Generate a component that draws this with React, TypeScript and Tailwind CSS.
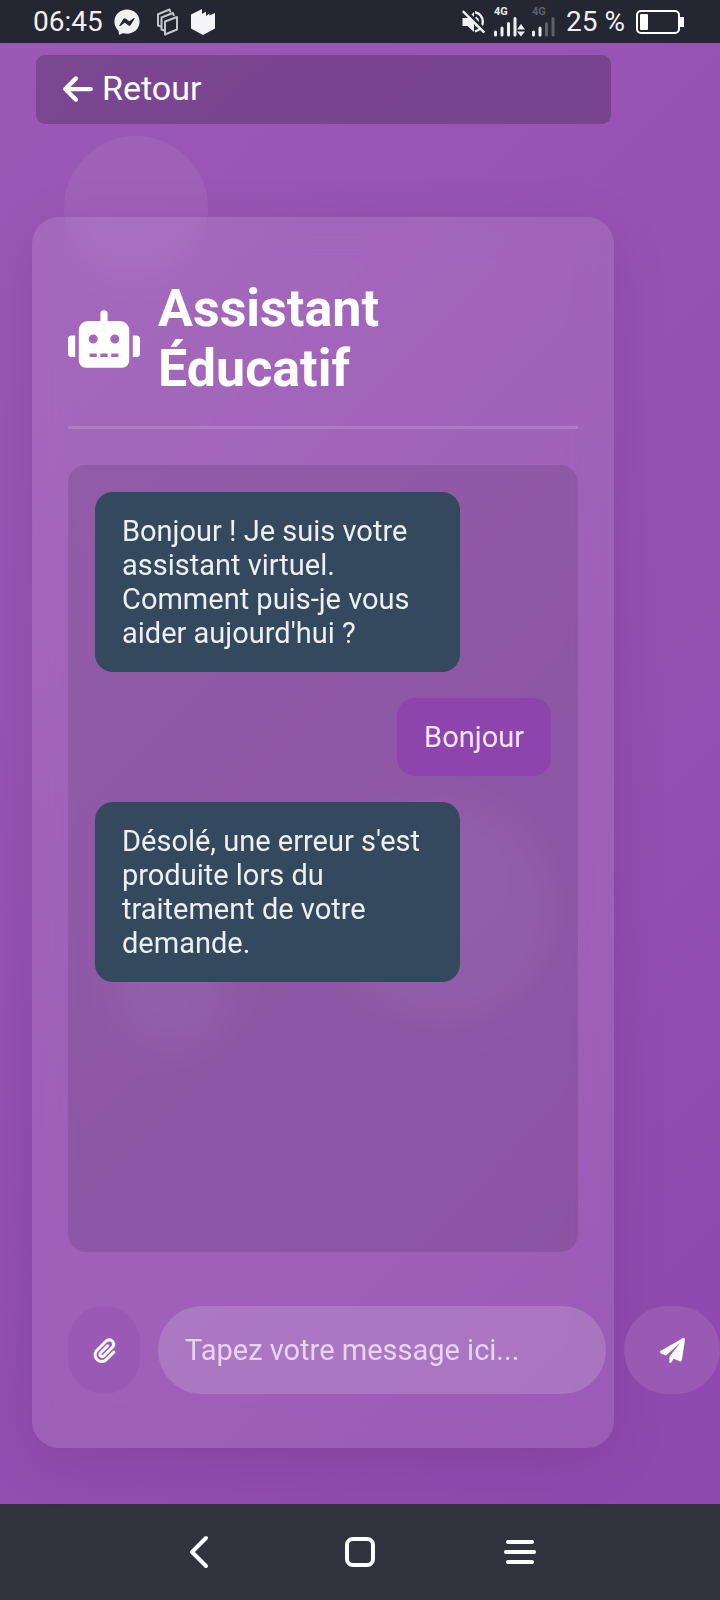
import React from "react";
import { FaRobot } from "react-icons/fa";
import { FaArrowLeft, FaPaperclip, FaFacebookMessenger } from "react-icons/fa6";

type Message = { from: "bot" | "user"; text: string };

const messages: Message[] = [
  { from: "bot", text: "Bonjour ! Je suis votre assistant virtuel. Comment puis-je vous aider aujourd'hui ?" },
  { from: "user", text: "Bonjour" },
  { from: "bot", text: "Désolé, une erreur s'est produite lors du traitement de votre demande." },
];

function StackIcon() {
  return (
    <svg className="h-7 w-6" viewBox="0 0 24 28" fill="none" stroke="#c4c5cb" strokeWidth="2" strokeLinejoin="round">
      <path d="M5 18.500 2 17.500V6.200L13.500 1.500l1 3" />
      <path d="M8.500 22.500 5.500 21.500V9.500L17 5l1 3" />
      <path d="M9 13.500 21 9v12.500L9 26.500z" />
    </svg>
  );
}

function BlockIcon() {
  return (
    <svg className="h-7 w-6" viewBox="0 0 24 28" fill="#f5f5f7">
      <path d="M0 6.500 11 1v5l4-2.500v4.500l3.500-2.500v2L24 5v15.500L12 27 0 20.500z" />
    </svg>
  );
}

function PlaneIcon() {
  return (
    <svg className="h-[25px] w-[25px]" viewBox="0 0 512 512" fill="currentColor">
      <path d="M511.6 36.86l-64 415.1c-1.500 9.734-7.375 18.220-15.970 23.050c-4.844 2.719-10.270 4.097-15.680 4.097c-4.188 0-8.319-.8154-12.290-2.472l-122.600-51.100l-50.860 76.290C226.300 508.500 219.800 512 212.800 512C201.300 512 192 502.700 192 491.200v-96.180c0-7.115 2.372-14.030 6.742-19.640L416 96l-293.700 264.300L19.690 317.500C8.438 312.800 .8125 302.200 .0625 289.100s5.469-23.720 16.060-29.990l448-255.100c10.690-6.109 23.880-5.547 34 1.406S513.500 24.720 511.600 36.860z" />
    </svg>
  );
}

function MutedIcon() {
  return (
    <svg className="h-6 w-6" viewBox="0 0 24 24" fill="none" stroke="#f0f0f2" strokeWidth="2.400">
      <path d="M0.500 8v8h5l6.500 6V2L5.500 8z" fill="#f0f0f2" stroke="none" />
      <path d="M13.500 7.500a5 5 0 0 1 0 8.500M13 2.200a9.800 9.800 0 0 1 0 19.200" />
      <path d="M2-1l23 23" stroke="#242632" strokeWidth="3" />
      <path d="M.8 1.200l21.500 21.500" />
    </svg>
  );
}

function Signal({ weak = false }: { weak?: boolean }) {
  return (
    <svg className={weak ? "h-9 w-6" : "h-9 w-8"} viewBox={weak ? "0 0 24 36" : "0 0 32 36"} strokeWidth="3" strokeLinecap="round" stroke="#f0f0f2">
      <text x="0" y="11" fontSize="11" fontWeight="700" fontFamily="Roboto, sans-serif" stroke="none" fill={weak ? "#5e606b" : "#e8e8ea"}>4G</text>
      <path d="M1.500 28v3M8 24v7" />
      <path d="M14.500 19.500v11.500M21 14.500v16.500" stroke={weak ? "#5e606b" : "#f0f0f2"} />
      {!weak && <path d="M27 20l4 5.500h-8zM27 32.500l4-5h-8z" fill="#f0f0f2" stroke="none" />}
    </svg>
  );
}

function Battery() {
  return (
    <svg className="h-6 w-12" viewBox="0 0 48 24" fill="none">
      <rect x="1" y="1" width="42" height="22" rx="4" stroke="#fff" strokeWidth="2" />
      <rect x="4" y="4" width="8" height="16" rx="1" fill="#fff" />
      <rect x="44" y="7" width="4" height="10" fill="#fff" />
    </svg>
  );
}

function StatusBar() {
  return (
    <header className="flex h-[43px] items-center justify-between bg-[#242632] pt-px pr-9 pl-[33px] text-[28px] leading-none text-[#f0f0f2]">
      <div className="flex items-center">
        <span className="mr-[11px]">06:45</span>
        <FaFacebookMessenger className="mr-4 h-[26px] w-[26px]" />
        <StackIcon />
        <span className="ml-[11px]">
          <BlockIcon />
        </span>
      </div>
      <div className="flex items-center">
        <span className="mr-2">
          <MutedIcon />
        </span>
        <span className="mr-1.5 self-start">
          <Signal />
        </span>
        <span className="mr-2.5 self-start">
          <Signal weak />
        </span>
        <span className="mr-[11px]">25 %</span>
        <Battery />
      </div>
    </header>
  );
}

function Bubble({ message }: { message: Message }) {
  return (
    <li
      className={
        message.from === "bot"
          ? "max-w-4/5 self-start rounded-[18px] bg-[#34495e] px-[27px] py-[22px] text-[#ecf0f1]"
          : "max-w-4/5 self-end rounded-[18px] bg-[#8e44ad] px-[27px] py-[22px] text-[#f6e6fb]"
      }
    >
      {message.text}
    </li>
  );
}

function NavBar() {
  return (
    <nav className="flex h-24 items-center justify-center gap-[112px] bg-[#32333f]" aria-label="Système">
      <button type="button" aria-label="Précédent" className="flex h-12 w-12 items-center justify-center">
        <svg className="h-9 w-9" viewBox="0 0 36 36" fill="none" stroke="#fff" strokeWidth="4" strokeLinecap="round" strokeLinejoin="round">
          <path d="M24 4 10 18 24 32" />
        </svg>
      </button>
      <button type="button" aria-label="Accueil" className="flex h-12 w-12 items-center justify-center">
        <svg className="h-[30px] w-[30px]" viewBox="0 0 30 30" fill="none" stroke="#fff" strokeWidth="4">
          <rect x="2" y="2" width="26" height="26" rx="6" />
        </svg>
      </button>
      <button type="button" aria-label="Menu" className="flex h-12 w-12 items-center justify-center">
        <svg className="h-8 w-8" viewBox="0 0 32 32" stroke="#fff" strokeWidth="4" strokeLinecap="round">
          <path d="M4 6h24M2 16h28M4 26h24" />
        </svg>
      </button>
    </nav>
  );
}

export default function App() {
  return (
    <div className="flex min-h-screen flex-col overflow-x-hidden font-[Roboto,sans-serif] text-white">
      <StatusBar />
      <main className="relative flex flex-1 flex-col bg-linear-135 from-[#9b59b6] to-[#8f48ae] pt-3 pr-[106px] pb-14 pl-8">
        <div className="absolute top-[93px] left-16 h-36 w-36 rounded-full bg-white/6" />
        <div className="absolute top-[762px] left-[338px] h-[216px] w-[216px] rounded-full bg-white/5" />
        <div className="absolute top-[894px] left-[118px] h-[108px] w-[108px] rounded-full bg-white/5" />
        <a href="#retour" className="relative mr-[3px] ml-1 flex h-[69px] items-center gap-[9px] rounded-[9px] bg-black/20 px-[27px] pb-0.5 text-[34px]">
          <FaArrowLeft className="h-[34px] w-[30px]" />
          Retour
        </a>
        <section className="relative mt-[93px] flex flex-1 flex-col rounded-[27px] bg-white/10 px-9 pt-[62px] pb-[54px] shadow-[0_14px_58px_rgba(0,0,0,0.1)] backdrop-blur-[18px]">
          <div className="flex items-center gap-[18px] border-b-3 border-white/15 pb-[27px]">
            <FaRobot className="h-[58px] w-[72px] shrink-0" />
            <h1 className="text-[52px] leading-[60px] font-bold">Assistant Éducatif</h1>
          </div>
          <ul className="mt-9 flex min-h-[600px] flex-1 flex-col gap-[26px] rounded-[18px] bg-black/10 p-[27px] text-[29px] leading-[34px]">
            {messages.map((message, index) => (
              <Bubble key={index} message={message} />
            ))}
          </ul>
          <form className="mt-[54px] -mr-[142px] flex h-[88px] gap-[18px]" onSubmit={(event) => event.preventDefault()}>
            <button type="button" aria-label="Joindre un fichier" className="flex w-[72px] shrink-0 items-center justify-center rounded-full bg-[#9b59b6]">
              <FaPaperclip className="h-[25px] w-[25px] stroke-current stroke-[6]" />
            </button>
            <input
              type="text"
              aria-label="Votre message"
              placeholder="Tapez votre message ici..."
              className="min-w-0 flex-1 rounded-full bg-white/15 px-[27px] pt-0.5 text-[29px] text-white outline-none placeholder:text-white/70"
            />
            <button type="submit" aria-label="Envoyer" className="flex w-24 shrink-0 items-center justify-center rounded-full bg-[#9b59b6]">
              <PlaneIcon />
            </button>
          </form>
        </section>
      </main>
      <NavBar />
    </div>
  );
}
